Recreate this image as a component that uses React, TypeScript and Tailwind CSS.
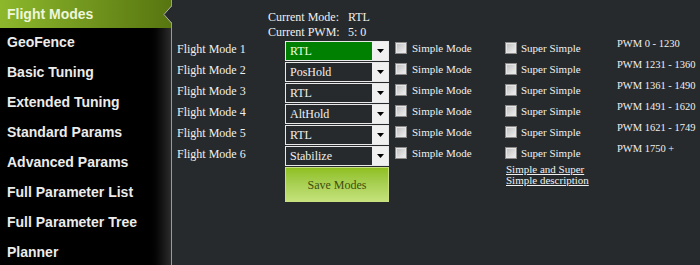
import React from 'react';

const navItems = [
  'Flight Modes',
  'GeoFence',
  'Basic Tuning',
  'Extended Tuning',
  'Standard Params',
  'Advanced Params',
  'Full Parameter List',
  'Full Parameter Tree',
  'Planner',
];

const modes = [
  { label: 'Flight Mode 1', value: 'RTL', pwm: 'PWM 0 - 1230', active: true },
  { label: 'Flight Mode 2', value: 'PosHold', pwm: 'PWM 1231 - 1360' },
  { label: 'Flight Mode 3', value: 'RTL', pwm: 'PWM 1361 - 1490' },
  { label: 'Flight Mode 4', value: 'AltHold', pwm: 'PWM 1491 - 1620' },
  { label: 'Flight Mode 5', value: 'RTL', pwm: 'PWM 1621 - 1749' },
  { label: 'Flight Mode 6', value: 'Stabilize', pwm: 'PWM 1750 +' },
];

const Checkbox: React.FC = () => (
  <span className="block w-[12px] h-[12px] border border-[#8a8a8a] bg-gradient-to-br from-[#bdbdbd] to-[#f2f2f2] shadow-[inset_0_0_0_1px_#e6e6e6]" />
);

const Combo: React.FC<{ value: string; active?: boolean }> = ({ value, active }) => (
  <div className="flex w-[104px] h-[20px] border border-[#e8e8e8]">
    <div
      className={`flex-1 flex items-center pl-[4px] text-[12px] ${
        active ? 'bg-[#008000] text-[#e8ffe0]' : 'bg-[#262a2c] text-[#f0f0f0]'
      }`}
    >
      {value}
    </div>
    <div className="w-[16px] bg-[#f0f0f0] flex items-center justify-center">
      <svg width="7" height="4" viewBox="0 0 7 4">
        <path d="M0 0h7L3.5 4z" fill="#000" />
      </svg>
    </div>
  </div>
);

const App: React.FC = () => {
  return (
    <div className="flex w-[700px] h-[265px] overflow-hidden bg-[#262a2c]">
      {/* sidebar */}
      <aside className="relative w-[172px] shrink-0 bg-gradient-to-r from-black from-[85%] to-[#2c2c2c] border-r border-[#9a9a9a]">
        <ul className="flex flex-col" style={{ fontFamily: '"Liberation Sans", Arial, sans-serif' }}>
          {navItems.map((item, i) => (
            <li
              key={item}
              className={`flex items-center pl-[7px] text-[14px] font-bold ${
                i === 0
                  ? 'h-[28px] bg-gradient-to-r from-[#8db82c] to-[#587610] text-[#eef6dc]'
                  : 'h-[30px] pb-[1px] text-[#ececec]'
              }`}
            >
              {item}
            </li>
          ))}
        </ul>
        <svg className="absolute right-[-1px] top-[6px]" width="9" height="17" viewBox="0 0 9 17">
          <path d="M9 0L1 8.5L9 17z" fill="#262a2c" />
          <path d="M8.5 0L1 8.5L8.5 17" fill="none" stroke="#b0b0b0" strokeWidth="1" />
        </svg>
      </aside>

      {/* content */}
      <main
        className="flex-1 pl-[5px] pt-[10px] text-[#f0f0f0] text-[12px]"
        style={{ fontFamily: '"Liberation Serif", "Times New Roman", serif' }}
      >
        <div className="ml-[91px] grid grid-cols-[80px_auto] leading-[15px]">
          <span>Current Mode:</span>
          <span>RTL</span>
          <span>Current PWM:</span>
          <span>5: 0</span>
        </div>

        <div className="mt-[1px] flex flex-col gap-[1px]">
          {modes.map((m) => (
            <div key={m.label} className="flex items-start h-[20px]">
              <span className="w-[108px] leading-[14px] mt-[1px]">{m.label}</span>
              <Combo value={m.value} active={m.active} />
              <div className="ml-[6px] w-[110px] flex items-center gap-[5px] mt-[1px] text-[11px] leading-[12px]">
                <Checkbox />
                <span>Simple Mode</span>
              </div>
              <div className="w-[112px] flex items-center gap-[4px] mt-[1px] text-[11px] leading-[12px]">
                <Checkbox />
                <span>Super Simple</span>
              </div>
              <span className="text-[10.5px] leading-[12px] -mt-[3px] whitespace-nowrap">{m.pwm}</span>
            </div>
          ))}
        </div>

        <div className="flex items-start mt-[1px] ml-[108px]">
          <button className="w-[104px] h-[35px] border border-[#c8e080] bg-gradient-to-b from-[#8fbf1e] to-[#c4e27a] text-[#3e4e0c] text-[12px]">
            Save Modes
          </button>
          <a className="ml-[117px] -mt-[3px] w-[86px] text-[11px] leading-[11px] underline text-[#f0f0f0]">
            Simple and Super Simple description
          </a>
        </div>
      </main>
    </div>
  );
};

export default App;
